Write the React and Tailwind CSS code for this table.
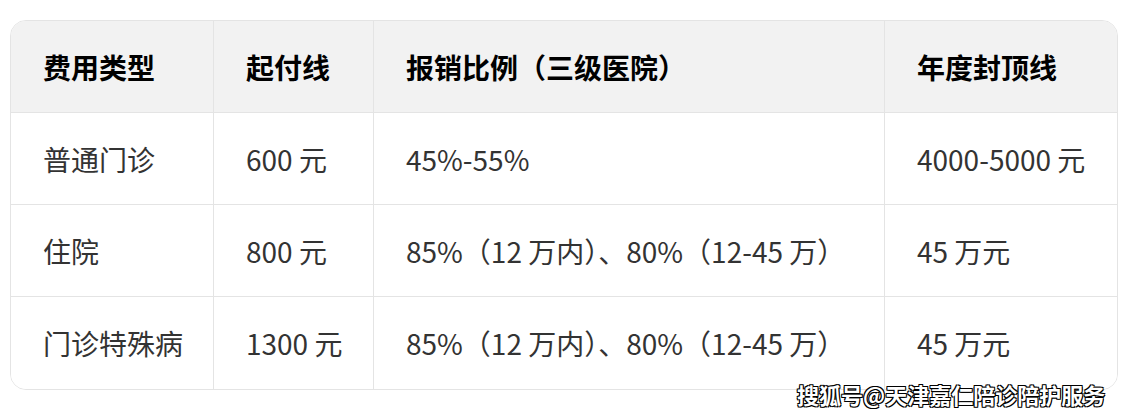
import React from "react";

const rows = [
  ["普通门诊", "600 元", "45%-55%", "4000-5000 元"],
  ["住院", "800 元", "85%（12 万内）、80%（12-45 万）", "45 万元"],
  ["门诊特殊病", "1300 元", "85%（12 万内）、80%（12-45 万）", "45 万元"],
];
const head = ["费用类型", "起付线", "报销比例（三级医院）", "年度封顶线"];

export default function App() {
  return (
    <div
      className="relative w-[1134px] h-[420px] bg-white pt-[20px] pl-[10px]"
      style={{ fontFamily: '"Noto Sans CJK SC", "Noto Sans", sans-serif' }}
    >
      <div className="w-[1108px] rounded-[16px] border border-[#e4e4e4] overflow-hidden">
        <div className="grid grid-cols-[203px_160px_511px_1fr] bg-[#f2f2f2]">
          {head.map((h, i) => (
            <div
              key={i}
              className={`h-[92px] flex items-center pl-[32px] text-[28px] font-bold text-black border-b border-[#e4e4e4] ${i < 3 ? "border-r" : ""}`}
            >
              {h}
            </div>
          ))}
        </div>
        {rows.map((r, ri) => (
          <div key={ri} className="grid grid-cols-[203px_160px_511px_1fr] bg-white">
            {r.map((c, i) => (
              <div
                key={i}
                className={`h-[92px] flex items-center pl-[32px] text-[28px] text-[#333333] border-[#e4e4e4] ${i < 3 ? "border-r" : ""} ${ri < 2 ? "border-b" : ""}`}
              >
                {c}
              </div>
            ))}
          </div>
        ))}
      </div>
      <div className="absolute left-[797px] top-[378px] text-[22px] text-white font-bold whitespace-nowrap [text-shadow:0_0_1px_#000,0_0_1px_#000,1px_1px_0_#000,-1px_-1px_0_#000,1px_-1px_0_#000,-1px_1px_0_#000]">
        搜狐号@天津嘉仁陪诊陪护服务
      </div>
    </div>
  );
}
